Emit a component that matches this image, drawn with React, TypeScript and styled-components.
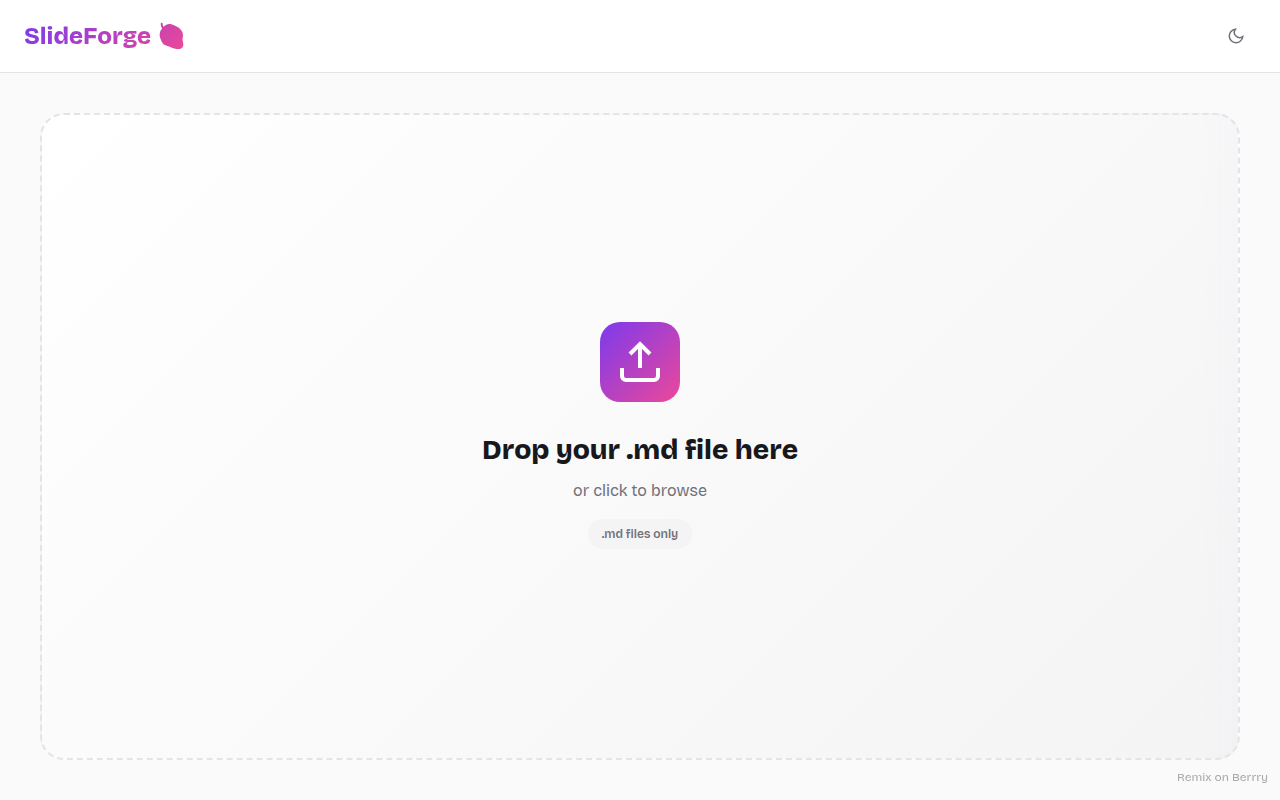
import React, { useState } from "react";
import styled, { createGlobalStyle } from "styled-components";

const GlobalStyle = createGlobalStyle`
  *, *::before, *::after { box-sizing: border-box; }
  body {
    margin: 0;
    background: #fafafa;
    color: #18181b;
    font-family: "Bricolage Grotesque", Inter, "Liberation Sans", sans-serif;
  }
`;

const brandGradient = "linear-gradient(135deg, #7c3aed 0%, #ec4899 100%)";

const Page = styled.div`
  display: flex;
  flex-direction: column;
  min-height: 100vh;
`;

const Header = styled.header`
  display: flex;
  align-items: center;
  justify-content: space-between;
  padding: 16px 24px;
  background: #ffffff;
  border-bottom: 1px solid #e4e4e7;
`;

const Brand = styled.h1`
  display: flex;
  align-items: center;
  gap: 8px;
  margin: 0;
  font-size: 24px;
  line-height: 32px;
  font-weight: 800;
`;

const BrandName = styled.span`
  background: linear-gradient(135deg, #7c3aed 0%, #d645a5 100%);
  background-clip: text;
  -webkit-background-clip: text;
  color: transparent;
`;

const ThemeButton = styled.button`
  display: flex;
  align-items: center;
  justify-content: center;
  width: 40px;
  height: 40px;
  padding: 0;
  border: 0;
  border-radius: 8px;
  background: transparent;
  color: #71717a;
  cursor: pointer;
`;

const Main = styled.main`
  flex: 1;
  display: flex;
  padding: 40px;
`;

const DropZone = styled.label`
  flex: 1;
  display: flex;
  flex-direction: column;
  align-items: center;
  justify-content: center;
  padding-bottom: 2px;
  border: 2px dashed #e4e4e7;
  border-radius: 24px;
  background:
    linear-gradient(90deg, rgba(99, 102, 241, 0) calc(100% - 40px), rgba(99, 102, 241, 0.012) 100%),
    linear-gradient(135deg, #ffffff 0%, #f4f4f5 100%);
  text-align: center;
  cursor: pointer;
`;

const FileInput = styled.input`
  position: absolute;
  width: 1px;
  height: 1px;
  opacity: 0;
`;

const UploadTile = styled.span`
  display: flex;
  align-items: center;
  justify-content: center;
  width: 80px;
  height: 80px;
  margin-bottom: 32px;
  border-radius: 20px;
  background: ${brandGradient};
  color: #ffffff;
`;

const Title = styled.span`
  margin-bottom: 12px;
  font-size: 28px;
  line-height: 32px;
  font-weight: 800;
`;

const Hint = styled.span`
  margin-bottom: 16px;
  font-size: 16px;
  line-height: 25px;
  color: #71717a;
`;

const Pill = styled.span`
  padding: 6px 14px;
  border-radius: 20px;
  background: #f4f4f5;
  color: #71717a;
  font-size: 12px;
  line-height: 18px;
  font-weight: 600;
`;

const RemixLink = styled.a`
  position: fixed;
  right: 12px;
  bottom: 14px;
  color: #a9a9ad;
  font-size: 12px;
  line-height: 18px;
  text-decoration: none;
`;

const Berry = () => (
  <svg width="26" height="28" viewBox="0 0 26 28" aria-hidden="true">
    <defs>
      <linearGradient id="berry" x1="0" y1="0" x2="1" y2="1">
        <stop offset="0" stopColor="#c643b0" />
        <stop offset="1" stopColor="#ec4899" />
      </linearGradient>
    </defs>
    <path
      fill="url(#berry)"
      d="M1.8 1.2C2.3.5 3.5.6 3.7 1.5C3.6 2.8 3.8 3.8 4.6 4.8C5.4 4 6 3.4 7 3C8.2 2.2 9.6 2 11 2C13 2 14.6 3.2 16.5 4C18.6 4.8 20.6 6 22 8C23.4 9.8 24.2 11.6 24 13.8C23.9 15.2 23.4 16.4 23.5 17.8C23.6 19.6 24.6 21.2 24.3 23C24 24.8 23.4 26 22 26.5C20.6 27.2 19 27.2 17.6 27C15.8 26.9 14.4 26.4 12.8 25.7C11.4 25 10 24.4 8.4 23.9C6.6 23.4 4.9 22.8 3.9 21.4C2.9 20.2 2.5 19 1.9 17.7C1.1 15.8.5 14 .7 12C.8 9.8 1.8 8 3.1 6.4C2.1 4.8 1.6 3 1.8 1.2Z"
    />
  </svg>
);

const MoonIcon = () => (
  <svg width="18" height="18" viewBox="0 0 24 24" fill="none" stroke="currentColor" strokeWidth="2" aria-hidden="true">
    <path d="M21 12.79A9 9 0 1 1 11.21 3 7 7 0 0 0 21 12.79z" />
  </svg>
);

const UploadIcon = () => (
  <svg width="48" height="48" viewBox="0 0 24 24" fill="none" stroke="currentColor" strokeWidth="2" aria-hidden="true">
    <path d="M21 15v4a2 2 0 0 1-2 2H5a2 2 0 0 1-2-2v-4" />
    <path d="M17 8l-5-5-5 5" />
    <path d="M12 3v12" />
  </svg>
);

export default function App() {
  const [fileName, setFileName] = useState("");

  return (
    <Page>
      <GlobalStyle />
      <Header>
        <Brand>
          <BrandName>SlideForge</BrandName>
          <Berry />
        </Brand>
        <ThemeButton type="button" aria-label="Toggle dark mode">
          <MoonIcon />
        </ThemeButton>
      </Header>
      <Main>
        <DropZone htmlFor="deck-file">
          <FileInput
            id="deck-file"
            type="file"
            accept=".md"
            onChange={(e) => setFileName(e.target.files?.[0]?.name ?? "")}
          />
          <UploadTile>
            <UploadIcon />
          </UploadTile>
          <Title>{fileName || "Drop your .md file here"}</Title>
          <Hint>or click to browse</Hint>
          <Pill>.md files only</Pill>
        </DropZone>
      </Main>
      <RemixLink href="#remix">Remix on Berrry</RemixLink>
    </Page>
  );
}
